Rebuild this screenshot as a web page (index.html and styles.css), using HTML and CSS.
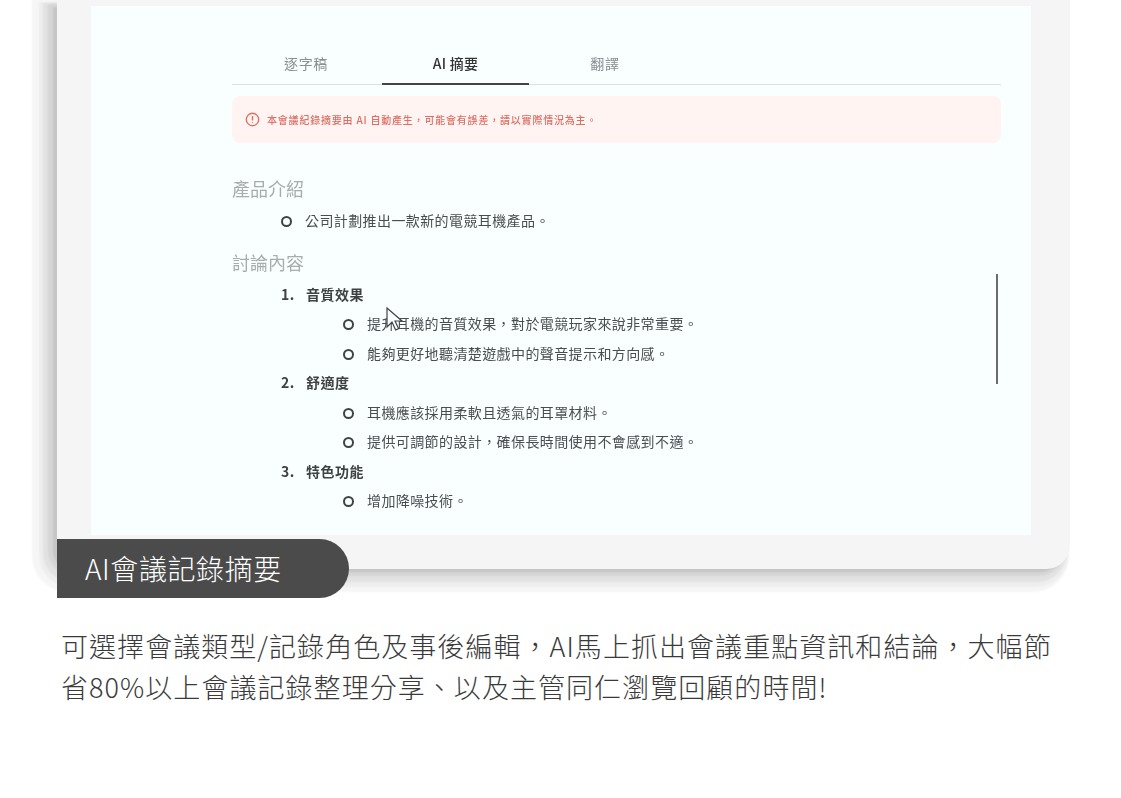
FILE: index.html
```html
<!DOCTYPE html>
<html lang="zh-Hant">
<head>
<meta charset="utf-8">
<title>AI會議記錄摘要</title>
<link rel="stylesheet" href="styles.css">
</head>
<body>
<main class="page">
  <section class="figure">
    <div class="frame">
      <div class="screen">
        <div class="content">
          <nav class="tabs">
            <span class="tab tab-first">逐字稿</span>
            <span class="tab tab-active">AI 摘要</span>
            <span class="tab tab-last">翻譯</span>
          </nav>
          <div class="alert">
            <svg class="alert-icon" viewBox="0 0 16 16" aria-hidden="true">
              <circle cx="8" cy="8" r="6.6"/>
              <path d="M8 4.2v4.8M8 10.8v1"/>
            </svg>
            <span>本會議紀錄摘要由 AI 自動產生，可能會有誤差，請以實際情況為主。</span>
          </div>
          <h3 class="heading heading-first">產品介紹</h3>
          <ul class="bullets bullets-top">
            <li>公司計劃推出一款新的電競耳機產品。</li>
          </ul>
          <h3 class="heading heading-second">討論內容</h3>
          <ol class="topics">
            <li>
              <span class="topic-title"><b class="num">1.</b>音質效果</span>
              <ul class="bullets">
                <li>提升耳機的音質效果，對於電競玩家來說非常重要。</li>
                <li>能夠更好地聽清楚遊戲中的聲音提示和方向感。</li>
              </ul>
            </li>
            <li>
              <span class="topic-title"><b class="num">2.</b>舒適度</span>
              <ul class="bullets">
                <li>耳機應該採用柔軟且透氣的耳罩材料。</li>
                <li>提供可調節的設計，確保長時間使用不會感到不適。</li>
              </ul>
            </li>
            <li>
              <span class="topic-title"><b class="num">3.</b>特色功能</span>
              <ul class="bullets">
                <li>增加降噪技術。</li>
              </ul>
            </li>
          </ol>
        </div>
        <div class="scrollbar"></div>
        <svg class="cursor" viewBox="0 0 18 26" aria-hidden="true">
          <path d="M1 1v19l5-5 3.6 8 3-1.4-3.6-7.6h7z"/>
        </svg>
      </div>
    </div>
    <div class="label">AI會議記錄摘要</div>
  </section>
  <p class="desc">可選擇會議類型/記錄角色及事後編輯，AI馬上抓出會議重點資訊和結論，大幅節省80%以上會議記錄整理分享、以及主管同仁瀏覽回顧的時間!</p>
</main>
</body>
</html>
```

FILE: styles.css
```css
*, *::before, *::after { box-sizing: border-box; }
html, body { margin: 0; padding: 0; background: #fff; }
body {
  font-family: "Noto Sans CJK TC", "Noto Sans", sans-serif;
  overflow: hidden;
  height: 798px;
}
.page { width: 1121px; }
.figure {
  position: relative;
  margin-left: 57px;
  width: 1013px;
  height: 598px;
}
.frame {
  height: 569px;
  padding: 6px 39px 34px 34px;
  background: #f5f5f5;
  border-radius: 0 0 24px 24px;
  box-shadow:
    -6px 5px 2px -2px #c6c6c6,
    -7.5px 5.5px 2px 1.5px #d6d6d6,
    -9px 8px 2px 5px #e2e2e2,
    -10px 10px 2px 8px #eeeeee,
    -13px 11px 2px 12px #f6f6f6;
}
.screen {
  position: relative;
  height: 529px;
  background: #f9ffff;
  overflow: hidden;
}
.content {
  margin-left: 141px;
  width: 769px;
  padding-top: 35px;
  filter: blur(0.45px);
}
.tabs {
  display: flex;
  height: 44px;
  border-bottom: 1px solid #dcdfe2;
  font-size: 14px;
  letter-spacing: 0.7px;
  color: #8a8f94;
}
.tab {
  height: 44px;
  padding-top: 12px;
  line-height: 20px;
  text-align: center;
}
.tab-first { width: 148px; }
.tab-active {
  width: 147px;
  margin-left: 2px;
  color: #333;
  font-weight: 500;
  letter-spacing: 0.3px;
  border-bottom: 2px solid #444;
}
.tab-last { width: 152px; }
.alert {
  display: flex;
  align-items: center;
  gap: 7px;
  height: 47px;
  margin-top: 11px;
  padding-left: 13px;
  background: #fff4f2;
  border-radius: 8px;
  font-size: 10px;
  font-weight: 500;
  letter-spacing: 0.8px;
  color: #dd6f64;
}
.alert-icon {
  width: 15px;
  height: 15px;
  fill: none;
  stroke: #df6f62;
  stroke-width: 1.5;
}
.heading {
  margin: 0;
  font-size: 18px;
  line-height: 24px;
  font-weight: 400;
  color: #a9acae;
}
.heading-first { margin-top: 33px; }
.heading-second { margin-top: 14px; }
.bullets {
  list-style: none;
  margin: 0;
  padding: 0 0 0 135px;
}
.bullets li {
  position: relative;
  height: 29.5px;
  line-height: 29.5px;
  font-size: 14px;
  letter-spacing: 0.4px;
  color: #4a4d50;
}
.bullets li::before {
  content: "";
  position: absolute;
  left: -24px;
  top: 10px;
  width: 11px;
  height: 11px;
  border: 2px solid #3f4244;
  border-radius: 50%;
}
.bullets-top { padding-left: 73px; margin-top: 6px; }
.topics {
  list-style: none;
  margin: 6px 0 0;
  padding: 0 0 0 49px;
}
.topic-title {
  display: flex;
  height: 29.5px;
  line-height: 29.5px;
  font-size: 14px;
  font-weight: 700;
  letter-spacing: 0.5px;
  color: #3f4244;
}
.num { width: 25px; font-weight: 700; }
.topics .bullets { padding-left: 86px; }
.scrollbar {
  position: absolute;
  left: 905px;
  top: 268px;
  width: 2px;
  height: 110px;
  background: #6a6c6e;
}
.cursor {
  position: absolute;
  left: 295px;
  top: 301px;
  width: 18px;
  height: 26px;
  fill: #fbfdfd;
  stroke: #3f4448;
  stroke-width: 1.2;
}
.label {
  position: absolute;
  left: 0;
  top: 539px;
  width: 292px;
  height: 59px;
  padding-left: 28px;
  background: #4a4b4a;
  border-radius: 0 30px 30px 0;
  color: #fff;
  font-size: 28px;
  font-weight: 300;
  letter-spacing: 0.6px;
  line-height: 58px;
}
.desc {
  width: 1000px;
  margin: 27px 0 0 61px;
  font-size: 27px;
  font-weight: 300;
  line-height: 41px;
  letter-spacing: 1.05px;
  color: #3a3a3a;
}
```
